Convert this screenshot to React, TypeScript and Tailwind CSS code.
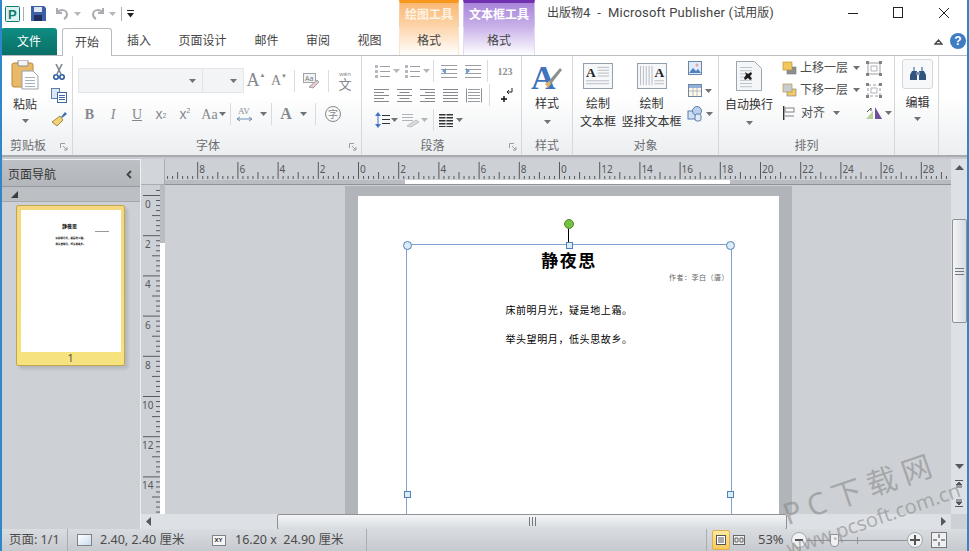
import type { ReactNode } from 'react';

// small drop-down triangle used all over the ribbon
function Caret({ className = '' }: { className?: string }) {
  return (
    <svg width="7" height="4" viewBox="0 0 7 4" className={className}>
      <path d="M0 0h7L3.5 4z" fill="#6f7276" />
    </svg>
  );
}

function Sep({ className = '' }: { className?: string }) {
  return <div className={`w-px h-[22px] bg-[#d9dbde] shrink-0 ${className}`} />;
}

function Cell({ className = '', children }: { className?: string; children?: ReactNode }) {
  return <div className={`flex items-center justify-center shrink-0 h-full ${className}`}>{children}</div>;
}

function Group({ className, label, launcher, children }: { className: string; label: string; launcher?: boolean; children: ReactNode }) {
  return (
    <section className={`flex flex-col shrink-0 h-full border-r border-[#d6d8dc] ${className}`}>
      <div className="h-[79px] shrink-0">{children}</div>
      <div className={`relative flex-1 flex items-center justify-center text-[12px] text-[#6c6e72] pt-[2px] ${launcher ? 'pr-[18px]' : ''}`}>
        {label}
        {launcher && (
          <svg width="8" height="8" viewBox="0 0 8 8" className="absolute right-[4px] top-[8px]">
            <path d="M.5 5V.5H5M3 3l4 4M7 4v3H4" fill="none" stroke="#9a9da1" />
          </svg>
        )}
      </div>
    </section>
  );
}

function Lines({ x = 0, y = 0, w = 12, n = 3, gap = 4, color = '#9a9da1' }: { x?: number; y?: number; w?: number; n?: number; gap?: number; color?: string }) {
  return (
    <>
      {Array.from({ length: n }).map((_, i) => (
        <rect key={i} x={x} y={y + i * gap} width={w} height="1" fill={color} />
      ))}
    </>
  );
}

function AlignIcon({ kind }: { kind: 'l' | 'c' | 'r' | 'j' }) {
  const rows = [15, 10, 15, 10, 15];
  return (
    <svg width="15" height="13" viewBox="0 0 15 13">
      {rows.map((w, i) => {
        const width = kind === 'j' ? 15 : w;
        const x = kind === 'l' || kind === 'j' ? 0 : kind === 'c' ? (15 - width) / 2 : 15 - width;
        return <rect key={i} x={x} y={i * 3} width={width} height="1" fill="#85888c" />;
      })}
    </svg>
  );
}

function LayerIcon({ down }: { down?: boolean }) {
  return (
    <svg width="15" height="14" viewBox="0 0 15 14">
      <rect x="5" y="6" width="9" height="7" fill={down ? '#f1cb6b' : '#8b8f94'} stroke="#77797c" strokeWidth=".6" />
      <rect x="1" y="1" width="9" height="8" fill={down ? '#c9ccd0' : '#f2c75c'} stroke="#b38a2a" strokeWidth=".6" />
    </svg>
  );
}

function GroupIcon({ broken }: { broken?: boolean }) {
  return (
    <svg width="16" height="15" viewBox="0 0 16 15">
      <path d="M2 2h12v11H2z" fill="none" stroke="#9a9da1" strokeDasharray={broken ? '3 2' : undefined} />
      <path d="M5 5h6v5H5z" fill="none" stroke="#b0b3b7" />
      {[[0, 0], [13, 0], [0, 12], [13, 12]].map(([x, y]) => (
        <rect key={`${x}-${y}`} x={x} y={y} width="3" height="3" fill="#7f8286" />
      ))}
    </svg>
  );
}

function TextBoxIcon({ vertical }: { vertical?: boolean }) {
  return (
    <svg width="30" height="26" viewBox="0 0 31 27">
      <rect x=".5" y=".5" width="30" height="26" fill="#f7f8fa" stroke="#8f9ba8" />
      {vertical ? (
        <>
          {[3, 6, 9, 12, 15].map((x) => (
            <rect key={x} x={x} y="3" width="1" height="20" fill="#b4bac2" />
          ))}
          <text x="18" y="15" fontSize="14" fontWeight="700" fontFamily="Liberation Serif" fill="#222">A</text>
          <Lines x={18} y={18} w={10} n={2} gap={3} color="#b4bac2" />
        </>
      ) : (
        <>
          <text x="3" y="15" fontSize="14" fontWeight="700" fontFamily="Liberation Serif" fill="#222">A</text>
          <Lines x={15} y={4} w={12} n={4} gap={3} color="#b4bac2" />
          <Lines x={3} y={18} w={24} n={2} gap={3} color="#b4bac2" />
        </>
      )}
    </svg>
  );
}

function Ribbon() {
  return (
    <div className="h-[102px] shrink-0 flex bg-gradient-to-b from-white from-40% to-[#eceef0] border-t border-[#b9bcc0] border-b-2 border-b-[#a7aaae] text-[12px] text-[#4c4c4c]">
      <Group className="w-[71px] ml-[2px]" label="剪贴板" launcher>
        <div className="flex h-full">
          <div className="w-[46px] flex flex-col items-center pt-[4px]">
            <svg width="28" height="30" viewBox="0 0 28 30">
              <rect x="1" y="3" width="21" height="24" rx="2" fill="#e8b968" stroke="#b98a3a" />
              <rect x="7" y="0" width="10" height="6" rx="1" fill="#f4f4f4" stroke="#8b8b8b" />
              <path d="M11 11h11l5 5v13H11z" fill="#fff" stroke="#9aa0a8" />
              <Lines x={14} y={17} w={10} n={4} gap={3} color="#a9b3bf" />
            </svg>
            <span className="mt-[6px] text-[#333]">粘贴</span>
            <Caret className="mt-[5px]" />
          </div>
          <div className="flex-1 flex flex-col items-center gap-[8px] pt-[8px] -ml-[2px]">
            <svg width="12" height="16" viewBox="0 0 12 16">
              <path d="M3 0l5 10M9 0L4 10" stroke="#7b8794" strokeWidth="1.6" />
              <circle cx="3" cy="13" r="2.2" fill="none" stroke="#2b5b9e" strokeWidth="1.6" />
              <circle cx="9" cy="13" r="2.2" fill="none" stroke="#2b5b9e" strokeWidth="1.6" />
            </svg>
            <svg width="16" height="15" viewBox="0 0 16 15">
              <rect x=".5" y=".5" width="8" height="10" fill="#dbe6f3" stroke="#5c7ea8" />
              <rect x="6.5" y="4.5" width="9" height="10" fill="#fff" stroke="#3f67a0" />
              <Lines x={8} y={7} w={6} n={3} gap={2} color="#3f67a0" />
            </svg>
            <svg width="17" height="16" viewBox="0 0 17 16">
              <path d="M10 6l4-5 2 2-5 4z" fill="#3c6fb5" />
              <path d="M1 11l8-6 3 4-6 6z" fill="#f0d078" stroke="#a98b3c" />
            </svg>
          </div>
        </div>
      </Group>

      <Group className="w-[289px]" label="字体" launcher>
        <div className="flex flex-col pl-[5px] pt-[12px]">
          <div className="flex items-center h-[25px]">
            <div className="w-[127px] h-full bg-[#f3f4f6] border border-[#e3e5e8] flex items-center justify-end pr-[6px]"><Caret /></div>
            <div className="w-[42px] h-full bg-[#f3f4f6] border border-l-0 border-[#e3e5e8] flex items-center justify-end pr-[6px]"><Caret /></div>
            <Cell className="w-[24px] text-[#85888c] text-[18px] [font-family:'Liberation_Serif',serif]">A<span className="text-[6px] -mt-[10px]">▲</span></Cell>
            <Cell className="w-[22px] text-[#85888c] text-[14px] [font-family:'Liberation_Serif',serif]">A<span className="text-[6px] -mt-[9px]">▼</span></Cell>
            <Sep className="ml-[4px]" />
            <Cell className="w-[33px]">
              <svg width="17" height="16" viewBox="0 0 17 16">
                <rect x=".5" y=".5" width="12" height="9" fill="#f2f3f5" stroke="#a0a3a7" />
                <text x="2" y="8" fontSize="7" fill="#777">Aa</text>
                <path d="M6 14l8-7 2 2-6 6z" fill="#e8c9d0" stroke="#a0a3a7" />
              </svg>
            </Cell>
            <Sep />
            <Cell className="w-[32px] flex-col leading-none text-[#85888c]">
              <span className="text-[6px] leading-[7px]">wén</span>
              <span className="text-[13px] leading-[13px]">文</span>
            </Cell>
          </div>
          <div className="flex items-center h-[24px] mt-[9px] text-[#85888c]">
            <Cell className="w-[23px] font-bold text-[14px] [font-family:'Liberation_Serif',serif]">B</Cell>
            <Cell className="w-[24px] italic text-[14px] [font-family:'Liberation_Serif',serif]">I</Cell>
            <Cell className="w-[24px] underline text-[14px] [font-family:'Liberation_Serif',serif]">U</Cell>
            <Cell className="w-[24px] text-[14px] [font-family:'Liberation_Sans',sans-serif]">x<sub className="text-[7px]">2</sub></Cell>
            <Cell className="w-[24px] text-[14px] [font-family:'Liberation_Sans',sans-serif]">x<sup className="text-[7px]">2</sup></Cell>
            <Cell className="w-[33px] text-[14px] [font-family:'Liberation_Serif',serif]">Aa<Caret className="ml-[1px]" /></Cell>
            <Sep />
            <Cell className="w-[40px]">
              <svg width="24" height="17" viewBox="0 0 24 17">
                <text x="2" y="8" fontSize="9" fontFamily="Liberation Serif" fill="#85888c">AV</text>
                <path d="M1 13h15M1 13l3-2M1 13l3 2M16 13l-3-2M16 13l-3 2" stroke="#6f8fb5" fill="none" />
              </svg>
              <Caret />
            </Cell>
            <Sep />
            <Cell className="w-[43px] gap-[8px] text-[16px] font-bold [font-family:'Liberation_Serif',serif]">A<Caret /></Cell>
            <Sep />
            <Cell className="w-[34px]">
              <span className="w-[16px] h-[16px] rounded-full border border-[#85888c] flex items-center justify-center text-[10px]">字</span>
            </Cell>
          </div>
        </div>
      </Group>

      <Group className="w-[160px]" label="段落" launcher>
        <div className="flex flex-col pl-[10px] pt-[3px]">
          <div className="flex items-center h-[24px]">
            {[0, 1].map((i) => (
              <Cell key={i} className={i ? 'w-[31px] gap-[3px]' : 'w-[30px] gap-[3px]'}>
                <svg width="15" height="13" viewBox="0 0 15 13">
                  <Lines x={5} y={1} w={10} n={3} gap={5} />
                  <rect x="0" y="0" width="3" height="3" fill="#b5b8bc" />
                  <rect x="0" y="5" width="3" height="3" fill="#b5b8bc" />
                  <rect x="0" y="10" width="3" height="3" fill="#b5b8bc" />
                </svg>
                <Caret className="opacity-50" />
              </Cell>
            ))}
            <Sep />
            <Cell className="w-[30px]">
              <svg width="16" height="14" viewBox="0 0 16 14">
                <Lines x={0} y={1} w={16} n={4} gap={4} />
                <path d="M5 4L1 7l4 3z" fill="#6f9ad0" />
              </svg>
            </Cell>
            <Cell className="w-[18px]">
              <svg width="16" height="14" viewBox="0 0 16 14">
                <Lines x={0} y={1} w={16} n={4} gap={4} />
                <path d="M1 4l4 3-4 3z" fill="#6f9ad0" />
              </svg>
            </Cell>
            <Sep className="ml-[5px]" />
            <Cell className="w-[34px] text-[10px] font-bold text-[#8c8f93] [font-family:'Liberation_Serif',serif]">123</Cell>
          </div>
          <div className="flex items-center h-[24px] -ml-[2px]">
            <Cell className="w-[23px]"><AlignIcon kind="l" /></Cell>
            <Cell className="w-[23px]"><AlignIcon kind="c" /></Cell>
            <Cell className="w-[23px]"><AlignIcon kind="r" /></Cell>
            <Cell className="w-[23px]"><AlignIcon kind="j" /></Cell>
            <Cell className="w-[23px]">
              <svg width="16" height="15" viewBox="0 0 16 15">
                <path d="M.5.5v14M15.5.5v14" stroke="#8d9094" />
                <Lines x={2} y={1} w={12} n={5} gap={3} />
              </svg>
            </Cell>
            <Sep className="ml-[4px]" />
            <Cell className="w-[34px]">
              <svg width="12" height="14" viewBox="0 0 12 14">
                <path d="M11 0v4H6M6 4l2-2M6 4l2 2" stroke="#222" fill="none" />
                <path d="M0 11h6M3 8v6" stroke="#111" strokeWidth="1.4" />
              </svg>
            </Cell>
          </div>
          <div className="flex items-center h-[24px] mt-px">
            <Cell className="w-[28px] gap-[1px]">
              <svg width="15" height="16" viewBox="0 0 15 16">
                <path d="M3 0L0 4h6zM3 16L0 12h6z" fill="#3f74c0" />
                <rect x="2.5" y="4" width="1" height="8" fill="#3f74c0" />
                <Lines x={7} y={3} w={8} n={3} gap={4} color="#333" />
              </svg>
              <Caret />
            </Cell>
            <Cell className="w-[30px] gap-[1px]">
              <svg width="18" height="15" viewBox="0 0 18 15">
                <Lines x={0} y={1} w={11} n={3} gap={3} color="#b0b3b7" />
                <path d="M5 13l9-6 3 2-8 5z" fill="#d9dbde" stroke="#a0a3a7" strokeWidth=".6" />
              </svg>
              <Caret className="opacity-50" />
            </Cell>
            <Sep className="ml-[3px]" />
            <Cell className="w-[34px] gap-[3px]">
              <svg width="14" height="13" viewBox="0 0 14 13">
                {[0, 3, 6, 9, 12].map((y) => (
                  <rect key={y} x="0" y={y} width="14" height="1.5" fill="#333" />
                ))}
                <rect x="6.5" y="0" width="1" height="13" fill="#eee" />
              </svg>
              <Caret />
            </Cell>
          </div>
        </div>
      </Group>

      <Group className="w-[51px]" label="样式">
        <div className="flex flex-col items-center pt-[5px]">
          <svg width="32" height="32" viewBox="0 0 32 32">
            <text x="0" y="28" fontSize="34" fontWeight="700" fontFamily="Liberation Serif" fill="#3d74bd">A</text>
            <path d="M17 21L29 7l2 2-11 14z" fill="#8f8f8f" />
            <path d="M14 23l4-3 2 3-3 4z" fill="#d9b56a" />
          </svg>
          <span className="mt-[2px] text-[#333]">样式</span>
          <Caret className="mt-[7px]" />
        </div>
      </Group>

      <Group className="w-[146px]" label="对象">
        <div className="flex h-full">
          <div className="w-[50px] flex flex-col items-center pt-[7px]">
            <TextBoxIcon />
            <span className="mt-[6px] leading-[18px] text-[#333]">绘制</span>
            <span className="leading-[18px] whitespace-nowrap text-[#333]">文本框</span>
          </div>
          <div className="w-[57px] ml-[-1px] pl-[2px] flex flex-col items-center pt-[7px]">
            <TextBoxIcon vertical />
            <span className="mt-[6px] leading-[18px] text-[#333]">绘制</span>
            <span className="leading-[18px] whitespace-nowrap text-[#333]">竖排文本框</span>
          </div>
          <div className="flex flex-col gap-[9px] pl-[9px] pt-[5px]">
            <svg width="14" height="14" viewBox="0 0 14 14">
              <rect x=".5" y=".5" width="13" height="13" fill="#dfeafa" stroke="#6d86a8" />
              <path d="M1 12l4-5 3 3 2-2 3 4z" fill="#4f81bd" />
              <circle cx="9" cy="4" r="1.5" fill="#e7a4a4" />
            </svg>
            <div className="flex items-center gap-[3px]">
              <svg width="14" height="13" viewBox="0 0 14 13">
                <rect x=".5" y=".5" width="13" height="12" fill="#fdf7e4" stroke="#6d86a8" />
                <rect x="1" y="1" width="12" height="3" fill="#8fb1dc" />
                <path d="M5 1v11M9 1v11M1 7h12" stroke="#9ab" strokeWidth=".7" />
              </svg>
              <Caret />
            </div>
            <div className="flex items-center gap-[3px] -ml-[1px]">
              <svg width="16" height="16" viewBox="0 0 16 16">
                <rect x="1" y="5" width="8" height="8" fill="#cfe0f5" stroke="#5c7ea8" />
                <circle cx="10" cy="5" r="4.5" fill="#b9d1ef" stroke="#5c7ea8" />
                <rect x="8" y="8" width="6" height="7" rx="2" fill="#dfeafa" stroke="#5c7ea8" />
              </svg>
              <Caret />
            </div>
          </div>
        </div>
      </Group>

      <Group className="w-[176px]" label="排列">
        <div className="flex h-full">
          <div className="w-[60px] flex flex-col items-center pt-[5px]">
            <svg width="26" height="30" viewBox="0 0 26 30">
              <path d="M.5.5h18l7 7v22H.5z" fill="#f5f6f8" stroke="#9aa3ae" />
              <Lines x={4} y={6} w={12} n={7} gap={3.2} color="#bcc3cc" />
              <path d="M9 11l3 2 3-2 1 2-2 2 2 3-2 1-2-2-3 2-1-2 2-3z" fill="#1c1c1c" />
            </svg>
            <span className="mt-[5px] whitespace-nowrap text-[#333]">自动换行</span>
            <Caret className="mt-[7px]" />
          </div>
          <div className="w-[87px] pl-[3px] flex flex-col pt-[1px]">
            {[['上移一层', false], ['下移一层', true]].map(([text, down]) => (
              <div key={text as string} className="flex items-center h-[22px] gap-[3px] whitespace-nowrap">
                <LayerIcon down={down as boolean} />
                <span>{text as string}</span>
                <Caret className="ml-[2px]" />
              </div>
            ))}
            <div className="flex items-center h-[23px] gap-[4px] whitespace-nowrap">
              <svg width="14" height="14" viewBox="0 0 14 14">
                <rect x="1" y="0" width="1.4" height="14" fill="#333" />
                <rect x="3" y="2" width="9" height="4" fill="#fff" stroke="#7f8286" />
                <path d="M3 10h9" stroke="#7f8286" />
              </svg>
              <span className="ml-[1px]">对齐</span>
              <Caret className="ml-[4px]" />
            </div>
          </div>
          <div className="flex flex-col items-start pt-[1px]">
            <div className="h-[22px] flex items-center"><GroupIcon /></div>
            <div className="h-[22px] flex items-center"><GroupIcon broken /></div>
            <div className="h-[23px] flex items-center gap-[1px] -ml-[1px]">
              <svg width="19" height="14" viewBox="0 0 19 14">
                <path d="M1 13L8 5v8z" fill="#b6d29a" />
                <path d="M10 1v12h7z" fill="#6f4f9c" />
                <path d="M2 6l4-4M6 2v3" stroke="#4d4d4d" fill="none" />
              </svg>
              <Caret />
            </div>
          </div>
        </div>
      </Group>

      <Group className="w-[44px]" label="">
        <div className="flex flex-col items-center pt-[3px] pl-[2px]">
          <div className="w-[31px] h-[30px] rounded-[3px] border border-[#d5d7da] bg-[#f7f8f9] flex items-center justify-center">
            <svg width="16" height="14" viewBox="0 0 16 14">
              <path d="M3 0h2v4H3zM11 0h2v4h-2z" fill="#8fa7c4" />
              <path d="M2 4h5v9H0V8zM9 4h5l2 4v5H9z" fill="#31557f" />
              <rect x="6" y="5" width="4" height="3" fill="#7a8ea6" />
            </svg>
          </div>
          <span className="mt-[5px] text-[#333]">编辑</span>
          <Caret className="mt-[5px]" />
        </div>
      </Group>
    </div>
  );
}

function TitleAndTabs() {
  const tabs = [
    ['插入', 'w-[54px]'],
    ['页面设计', 'w-[73px]'],
    ['邮件', 'w-[55px]'],
    ['审阅', 'w-[48px]'],
    ['视图', 'w-[55px]'],
  ];
  return (
    <div className="shrink-0 bg-white">
      <div className="flex h-[27px]">
        <div className="w-[399px] flex items-center pl-[5px]">
          <svg width="15" height="16" viewBox="0 0 15 16">
            <rect x=".5" y=".5" width="14" height="15" rx="1" fill="#dff1ee" stroke="#0d7a70" />
            <text x="3" y="13" fontSize="13" fontWeight="700" fontFamily="Liberation Sans" fill="#0d7a70">P</text>
          </svg>
          <div className="w-px h-[14px] bg-[#a9acb0] ml-[3px]" />
          <svg width="15" height="15" viewBox="0 0 15 15" className="ml-[7px]">
            <path d="M0 0h13l2 2v13H0z" fill="#3c5fa8" />
            <rect x="3" y="1" width="8" height="5" fill="#dfe6f3" />
            <rect x="3" y="9" width="8" height="6" fill="#1f2f5c" />
          </svg>
          <svg width="15" height="13" viewBox="0 0 15 13" className="ml-[9px]">
            <path d="M2 1v5h5M2 6c3-4 9-4 10 1 0 2-1 4-3 5" fill="none" stroke="#a9acb0" strokeWidth="2" />
          </svg>
          <Caret className="ml-[4px] opacity-50" />
          <svg width="15" height="13" viewBox="0 0 15 13" className="ml-[9px]">
            <path d="M13 1v5H8M13 6c-3-4-9-4-10 1 0 2 1 4 3 5" fill="none" stroke="#a9acb0" strokeWidth="2" />
          </svg>
          <Caret className="ml-[4px] opacity-50" />
          <div className="w-px h-[14px] bg-[#a9acb0] ml-[5px]" />
          <svg width="7" height="8" viewBox="0 0 7 8" className="ml-[5px]">
            <path d="M0 0h7v1H0zM0 3h7L3.500 7.500z" fill="#222" />
          </svg>
        </div>
        <div className="w-[60px] border-t-[3px] border-t-[#f7981d] border-x border-x-[#f3d1a3] bg-gradient-to-b from-[#fbb873] to-[#fcd5ab] flex items-center justify-center text-[12px] text-[#fdf3e3] font-bold">绘图工具</div>
        <div className="w-[4px]" />
        <div className="w-[72px] border-t-[3px] border-t-[#7030b0] border-x border-x-[#d3c2e8] bg-gradient-to-b from-[#a984da] to-[#c9b2e8] flex items-center justify-center text-[12px] text-white font-bold">文本框工具</div>
        <div className="pl-[12px] pt-[5px] text-[12px] text-[#444] whitespace-pre leading-[16px] [font-family:Roboto,'Noto_Sans_CJK_SC',sans-serif]">
          出版物<span className="text-[13px] tracking-[.2px]">4  -  Microsoft Publisher (</span>试用版<span className="text-[13px]">)</span>
        </div>
        <div className="flex-1 relative">
          <svg width="102" height="12" viewBox="0 0 102 12" className="absolute right-[19px] top-[7px]">
            <path d="M0 6.500h10" stroke="#222" />
            <rect x="45.500" y=".5" width="9" height="10" fill="none" stroke="#222" />
            <path d="M91 1l10 10M101 1L91 11" stroke="#222" />
          </svg>
        </div>
      </div>
      <div className="flex h-[28px] text-[12px] text-[#444]">
        <div className="w-[399px] flex items-end pl-[1px]">
          <div className="w-[56px] h-[27px] rounded-t-[3px] bg-gradient-to-b from-[#0f8d83] to-[#0a6f66] text-white flex items-center justify-center">文件</div>
          <div className="w-[50px] h-[28px] ml-[5px] border border-b-0 border-[#b9bcc0] rounded-t-[3px] bg-white flex items-center justify-center relative top-px z-10">开始</div>
          {tabs.map(([label, w]) => (
            <div key={label} className={`${w} h-full flex items-center justify-center`}>{label}</div>
          ))}
        </div>
        <div className="w-[60px] border-x border-x-[#f7e6cf] bg-gradient-to-b from-[#fcd5ab] to-white flex items-center justify-center">格式</div>
        <div className="w-[4px]" />
        <div className="w-[72px] border-x border-x-[#e4dbf2] bg-gradient-to-b from-[#c9b2e8] to-white flex items-center justify-center">格式</div>
        <div className="flex-1 flex items-center justify-end pr-[3px] gap-[7px]">
          <svg width="9" height="7" viewBox="0 0 9 7"><path d="M1 6l3.500-4L8 6z" fill="none" stroke="#444" strokeWidth="1.300" /></svg>
          <span className="w-[16px] h-[16px] rounded-full bg-[#3f7cc4] text-white text-[12px] font-bold flex items-center justify-center [font-family:'Liberation_Sans',sans-serif]">?</span>
        </div>
      </div>
    </div>
  );
}

function NavPanel() {
  return (
    <aside className="w-[139px] shrink-0 ml-[2px] bg-[#cdd1d6] flex flex-col border-r border-t border-[#eef0f2] rounded-tl-[2px] mt-[2px]">
      <div className="h-[27px] shrink-0 bg-gradient-to-b from-[#bdc0c4] to-[#b3b6ba] border-b border-[#96999d] flex items-center justify-between pl-[6px] pr-[8px] pt-[3px] text-[12px] text-[#333]">
        <span>页面导航</span>
        <svg width="6" height="9" viewBox="0 0 6 9"><path d="M5 1L1.500 4.500 5 8" fill="none" stroke="#444" strokeWidth="1.800" /></svg>
      </div>
      <div className="h-[15px] shrink-0 bg-[#bcbfc3] border-b border-[#a5a8ac] pl-[9px] pt-[4px]">
        <svg width="7" height="7" viewBox="0 0 7 7" className="block"><path d="M7 0v7H0z" fill="#3c3c3c" /></svg>
      </div>
      <div className="pl-[14px] pt-[3px]">
        <div className="w-[109px] h-[161px] rounded-[2px] bg-gradient-to-b from-[#f5d77f] to-[#f6e37f] border border-[#c4a54f] px-[3px] pt-[4px] shadow-[3px_3px_3px_#b5b8bc] flex flex-col items-center">
          <div className="w-[100px] h-[142px] bg-white relative flex flex-col items-center pt-[14px] text-black text-[2.500px] leading-[3px] shrink-0">
            <span className="font-bold text-[5px] leading-[4px] -ml-[2px] mb-[9px]">静夜思</span>
            <div className="absolute right-[12px] top-[21px] w-[14px] h-px bg-[#999]" />
            <span className="font-bold mb-[3px]">床前明月光，疑是地上霜。</span>
            <span className="font-bold">举头望明月，低头思故乡。</span>
          </div>
          <span className="text-[10px] leading-[13px] text-[#444] [font-family:'Noto_Sans',sans-serif]">1</span>
        </div>
      </div>
    </aside>
  );
}

function HRuler() {
  const x0 = 193; // page left edge inside this ruler
  const step = 40.2 / 8;
  const ticks = Array.from({ length: 158 }, (_, i) => i - 39);
  return (
    <svg width="786" height="26" viewBox="0 0 786 26" className="block">
      <rect x="0" y="21" width="240" height="4" fill="#b9bcc0" />
      <rect x="240" y="21" width="325" height="4" fill="#fff" />
      <rect x="565" y="21" width="221" height="4" fill="#b9bcc0" />
      <rect x="0" y="25" width="786" height="1" fill="#8f9296" />
      {ticks.map((i) => {
        const x = x0 + i * step;
        if (x < 0 || x > 786) return null;
        const major = i % 8 === 0;
        const mid = i % 4 === 0;
        return <rect key={i} x={x} y={major ? 3 : mid ? 13 : 17} width="1" height={major ? 17 : mid ? 7 : 3} fill="#56595d" />;
      })}
      {Array.from({ length: 20 }, (_, i) => i * 2 - 10).map((n) => {
        const x = x0 + n * 20.1;
        if (x > 770) return null;
        return (
          <text key={n} x={x + 2} y="14" fontSize="10" fontFamily="Noto Sans" fill="#55585c">{Math.abs(n) === 10 ? 0 : Math.abs(n)}</text>
        );
      })}
    </svg>
  );
}

function VRuler() {
  const y0 = 10; // page top inside this ruler
  const step = 40.2 / 8;
  return (
    <svg width="24" height="329" viewBox="0 0 24 329" className="block">
      <rect x="19" y="0" width="5" height="58" fill="#b9bcc0" />
      <rect x="19" y="58" width="5" height="271" fill="#fff" />
      {Array.from({ length: 66 }, (_, i) => i - 1).map((i) => {
        const y = y0 + i * step;
        const major = i % 8 === 0;
        const mid = i % 4 === 0;
        return <rect key={i} x={major ? 2 : mid ? 11 : 15} y={y} width={major ? 17 : mid ? 8 : 4} height="1" fill="#56595d" />;
      })}
      {[0, 2, 4, 6, 8, 10, 12, 14].map((n) => (
        <text key={n} x={n > 8 ? 1 : 4} y={y0 + n * 20.1 + 13} fontSize="10" fontFamily="Noto Sans" fill="#55585c">{n}</text>
      ))}
    </svg>
  );
}

function Handle({ className }: { className: string }) {
  return <div className={`absolute border border-[#4f81bd] bg-[#dcecf5] ${className}`} />;
}

function Workspace() {
  return (
    <div className="flex-1 flex flex-col min-w-0 bg-[#cdd1d6] mt-[2px]">
      <div className="flex h-[26px] shrink-0">
        <div className="w-[24px] bg-[#d2d5d9] border-r border-b border-[#a9acb0]" />
        <HRuler />
        <div className="w-[16px] bg-[#dde1e6] flex justify-center pt-[6px]">
          <svg width="9" height="5" viewBox="0 0 9 5"><path d="M4.500 0L9 5H0z" fill="#55585c" /></svg>
        </div>
      </div>
      <div className="flex h-[329px] shrink-0">
        <div className="w-[24px] shrink-0"><VRuler /></div>
        <div className="w-[786px] shrink-0 overflow-hidden pl-[180px] pt-[1px]">
          <div className="w-[447px] h-[400px] bg-[#b1b4b8] px-[13px] pt-[10px]">
            <div className="w-[421px] h-[390px] bg-white pl-[48px] pt-[48px]">
              <div className="relative w-[326px] h-[370px] border border-dotted border-[#4f81bd] text-black [outline:1px_solid_#7fa3cc] outline-offset-[-1px]">
                <div className="absolute left-[161px] -top-[20px] w-px h-[20px] bg-black" />
                <div className="absolute left-[157px] -top-[26px] w-[10px] h-[10px] rounded-full bg-[#78c042] border border-[#4f8a2a]" />
                <Handle className="-left-[4px] -top-[4px] w-[9px] h-[9px] rounded-full" />
                <Handle className="-right-[4px] -top-[4px] w-[9px] h-[9px] rounded-full" />
                <Handle className="left-[159px] -top-[3px] w-[7px] h-[7px]" />
                <Handle className="-left-[3px] top-[246px] w-[7px] h-[7px]" />
                <Handle className="-right-[3px] top-[246px] w-[7px] h-[7px]" />
                <div className="pt-[5px] text-center text-[17px] leading-[24px] font-bold tracking-[1.500px] [font-family:'Liberation_Serif','Noto_Sans_CJK_SC',serif]">静夜思</div>
                <div className="text-right pr-[2px] text-[7px] leading-[10px] -mt-[1px] text-[#666] tracking-[.5px]">作者：李白（唐）</div>
                <div className="text-center text-[10px] leading-[14px] mt-[20px] tracking-[.6px]">床前明月光，疑是地上霜。</div>
                <div className="text-center text-[10px] leading-[14px] mt-[15px] tracking-[.6px]">举头望明月，低头思故乡。</div>
              </div>
            </div>
          </div>
        </div>
        <div className="w-[16px] bg-[#dde1e6] flex flex-col items-center">
          <div className="h-[34px] shrink-0" />
          <div className="w-[15px] h-[104px] shrink-0 rounded-[2px] border border-[#8f9296] bg-gradient-to-r from-[#f4f5f7] to-[#d7dbe0] flex items-center justify-center">
            <svg width="9" height="7" viewBox="0 0 9 7"><path d="M0 .5h9M0 3.500h9M0 6.500h9" stroke="#75787c" /></svg>
          </div>
          <div className="flex-1 flex flex-col items-center justify-end gap-[11px] pb-[7px]">
            <svg width="9" height="5" viewBox="0 0 9 5"><path d="M0 0h9L4.500 5z" fill="#55585c" /></svg>
            <svg width="8" height="8" viewBox="0 0 8 8"><path d="M0 .5h8M4 2L7 5H1zM1 7h6" stroke="#55585c" fill="#55585c" /></svg>
            <svg width="8" height="8" viewBox="0 0 8 8"><path d="M1 1h6M4 6L1 3h6zM0 7.500h8" stroke="#55585c" fill="#55585c" /></svg>
          </div>
        </div>
      </div>
      <div className="flex h-[16px] shrink-0 w-[810px] bg-[#dde1e6] items-center border-b border-[#8f9296]">
        <div className="w-[136px] pl-[5px]">
          <svg width="5" height="9" viewBox="0 0 5 9" className="block"><path d="M5 0v9L0 4.500z" fill="#55585c" /></svg>
        </div>
        <div className="w-[510px] h-[16px] rounded-[2px] border border-[#8f9296] bg-gradient-to-b from-[#f4f5f7] to-[#d7dbe0] flex items-center justify-center">
          <svg width="7" height="9" viewBox="0 0 7 9"><path d="M.5 0v9M3.500 0v9M6.500 0v9" stroke="#75787c" /></svg>
        </div>
        <div className="flex-1 flex justify-end pr-[5px]">
          <svg width="5" height="9" viewBox="0 0 5 9"><path d="M0 0v9l5-4.500z" fill="#55585c" /></svg>
        </div>
      </div>
    </div>
  );
}

function StatusBar() {
  return (
    <footer className="h-[22px] shrink-0 flex items-center bg-gradient-to-b from-[#d9dce0] to-[#c6c9cd] text-[12.500px] text-[#4c4c4c] whitespace-pre [font-family:'Noto_Sans','Noto_Sans_CJK_SC',sans-serif]">
      <span className="w-[68px] pl-[9px] border-r border-[#a9acb0] h-full flex items-center shrink-0">页面: 1/1</span>
      <div className="w-[9px]" />
      <div className="w-[15px] h-[12px] border border-[#7f8286] bg-gradient-to-br from-white to-[#c9dcf0] shrink-0" />
      <span className="ml-[8px] w-[112px] shrink-0">2.40, 2.40 厘米</span>
      <svg width="14" height="11" viewBox="0 0 14 11" className="shrink-0">
        <rect x=".5" y=".5" width="13" height="10" fill="#f4f5f7" stroke="#7f8286" />
        <text x="2.500" y="7" fontSize="6" fontWeight="700" fontFamily="Liberation Sans" fill="#222">XY</text>
      </svg>
      <span className="ml-[9px] w-[131px] shrink-0">16.20 x  24.90 厘米</span>
      <div className="w-px h-full bg-[#a9acb0]" />
      <div className="w-[339px]" />
      <div className="w-px h-full bg-[#a9acb0]" />
      <div className="ml-[5px] w-[18px] h-[20px] rounded-[2px] bg-gradient-to-b from-[#fde9a0] to-[#f8c95c] border border-[#e0b04c] flex items-center justify-center">
        <svg width="10" height="10" viewBox="0 0 10 10"><rect x=".5" y=".5" width="9" height="9" fill="#fff" stroke="#555" /><path d="M2 3h6M2 5h6M2 7h6" stroke="#555" /></svg>
      </div>
      <svg width="12" height="10" viewBox="0 0 12 10" className="ml-[3px]"><rect x=".5" y=".5" width="11" height="9" fill="#eee" stroke="#666" /><path d="M2 3h3v4H2zM7 3h3v4H7z" fill="none" stroke="#666" /></svg>
      <span className="ml-[13px] w-[24px] text-[13px]">53%</span>
      <span className="ml-[9px] w-[16px] h-[16px] rounded-full bg-[#f0f1f3] border border-[#a5a8ac] flex items-center justify-center">
        <svg width="8" height="2" viewBox="0 0 8 2"><rect width="8" height="2" fill="#555" /></svg>
      </span>
      <div className="relative w-[100px] h-px bg-[#8f9296]">
        <div className="absolute left-[23px] -top-[6px] w-[9px] h-[13px] bg-[#f0f1f3] border border-[#8f9296] rounded-b-[4px]" />
        <div className="absolute left-[50px] -top-[3px] w-px h-[7px] bg-[#8f9296]" />
      </div>
      <span className="w-[16px] h-[16px] rounded-full bg-[#f0f1f3] border border-[#a5a8ac] flex items-center justify-center">
        <svg width="10" height="10" viewBox="0 0 10 10"><path d="M0 4h10v2H0zM4 0h2v10H4z" fill="#555" /></svg>
      </span>
      <svg width="16" height="16" viewBox="0 0 16 16" className="ml-[8px]">
        <rect x=".5" y=".5" width="15" height="15" fill="#eef0f2" stroke="#777" />
        <path d="M8 2v4M8 10v4M2 8h4M10 8h4" stroke="#333" />
      </svg>
    </footer>
  );
}

export default function App() {
  return (
    <div className="relative w-[969px] h-[551px] overflow-hidden flex flex-col bg-[#cdd1d6] [font-family:'Noto_Sans','Noto_Sans_CJK_SC',sans-serif]">
      <TitleAndTabs />
      <Ribbon />
      <div className="flex h-[372px] shrink-0 bg-[#c6c9cd]">
        <NavPanel />
        <Workspace />
      </div>
      <StatusBar />

      {/* window edges and the watermark lie over the whole window */}
      <div className="absolute left-0 top-0 bottom-0 w-[2px] bg-[#2f86c9]" />
      <div className="absolute right-0 top-0 bottom-0 w-[2px] bg-[#2f86c9]" />
      <div className="absolute left-[784px] top-[495px] -rotate-[19deg] origin-left text-[30px] leading-[40px] tracking-[7px] text-[#8a8a8a]/60 whitespace-pre pointer-events-none">PC下载网</div>
      <div className="absolute left-[787px] top-[537px] -rotate-[19deg] origin-left text-[20px] leading-[24px] text-[#8a8a8a]/60 whitespace-pre pointer-events-none">www.pcsoft.com.cn</div>
    </div>
  );
}
